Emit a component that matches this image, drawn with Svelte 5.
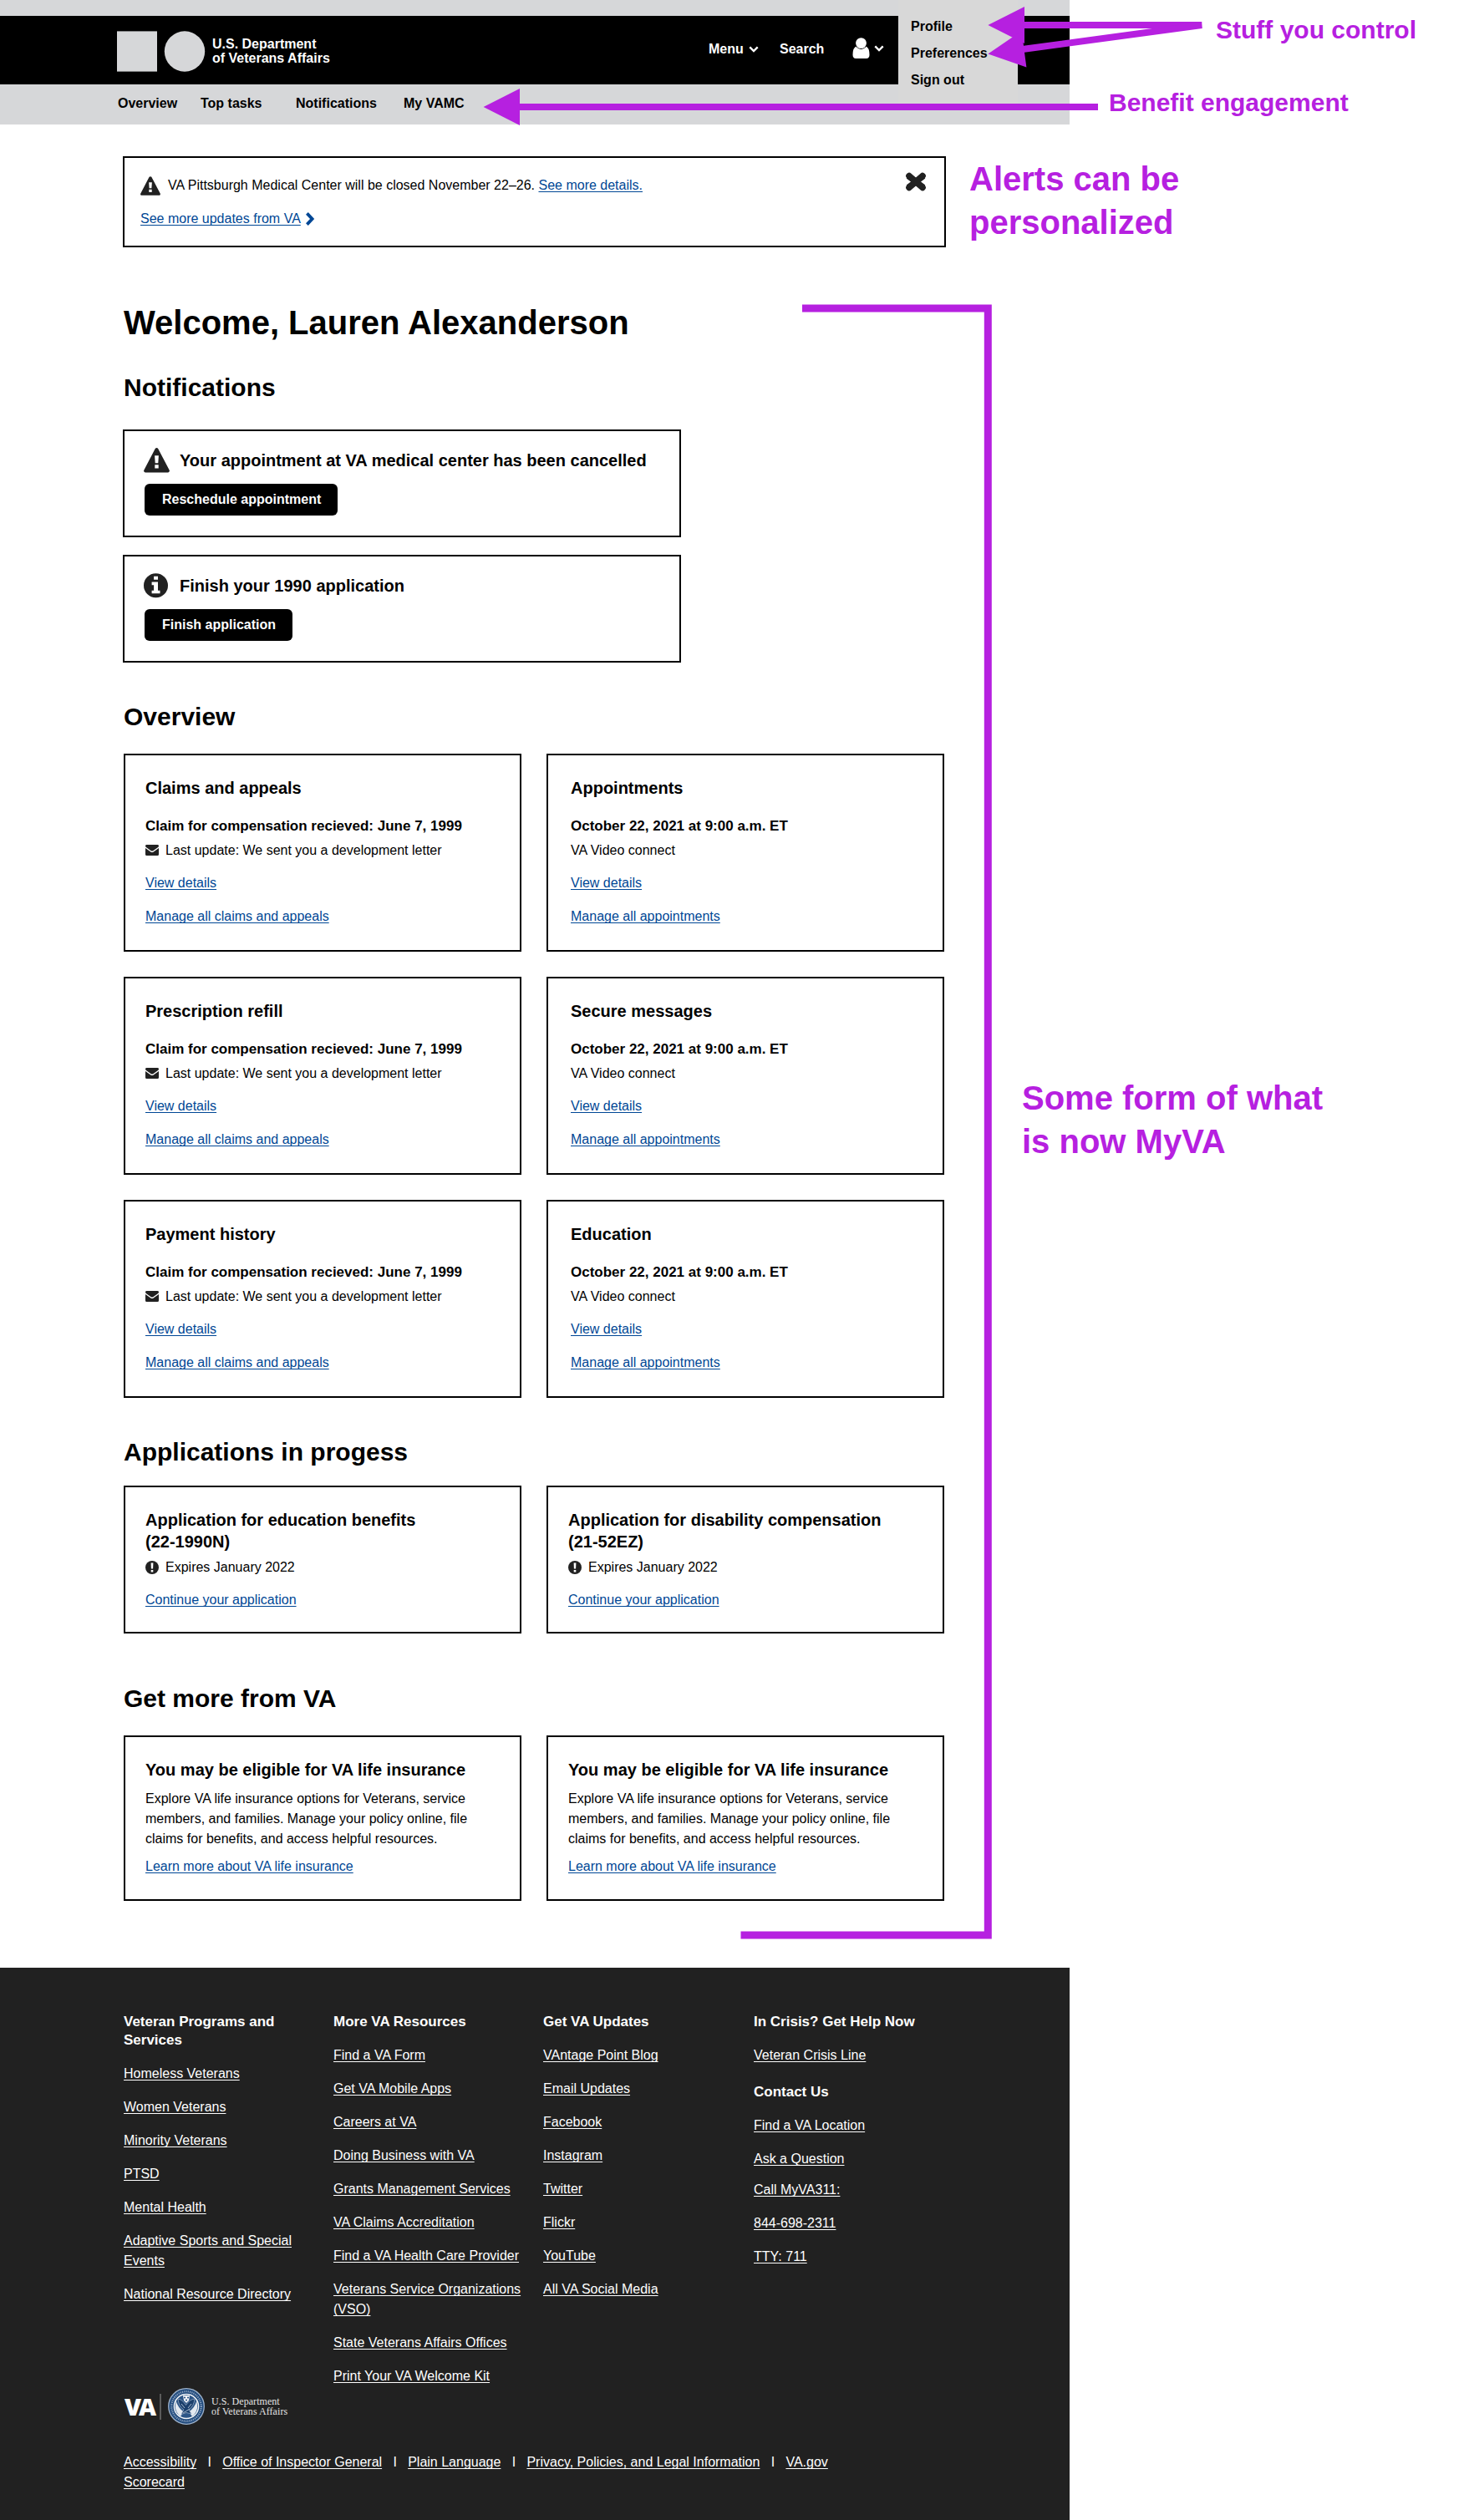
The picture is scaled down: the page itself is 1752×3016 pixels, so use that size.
<script>
  const navItems = ['Overview', 'Top tasks', 'Notifications', 'My VAMC'];
  const menuItems = ['Profile', 'Preferences', 'Sign out'];

  const notifications = [
    { icon: 'warning', title: 'Your appointment at VA medical center has been cancelled', action: 'Reschedule appointment' },
    { icon: 'info', title: 'Finish your 1990 application', action: 'Finish application' }
  ];

  const overview = [
    ['Claims and appeals', 'claim'],
    ['Appointments', 'visit'],
    ['Prescription refill', 'claim'],
    ['Secure messages', 'visit'],
    ['Payment history', 'claim'],
    ['Education', 'visit']
  ];

  const applications = [
    { name: 'Application for education benefits', form: '(22-1990N)' },
    { name: 'Application for disability compensation', form: '(21-52EZ)' }
  ];

  const offers = [1, 2];

  const footer = [
    [
      {
        title: 'Veteran Programs and\nServices',
        links: ['Homeless Veterans', 'Women Veterans', 'Minority Veterans', 'PTSD', 'Mental Health', 'Adaptive Sports and Special\nEvents', 'National Resource Directory']
      }
    ],
    [
      {
        title: 'More VA Resources',
        links: ['Find a VA Form', 'Get VA Mobile Apps', 'Careers at VA', 'Doing Business with VA', 'Grants Management Services', 'VA Claims Accreditation', 'Find a VA Health Care Provider', 'Veterans Service Organizations\n(VSO)', 'State Veterans Affairs Offices', 'Print Your VA Welcome Kit']
      }
    ],
    [
      {
        title: 'Get VA Updates',
        links: ['VAntage Point Blog', 'Email Updates', 'Facebook', 'Instagram', 'Twitter', 'Flickr', 'YouTube', 'All VA Social Media']
      }
    ],
    [
      { title: 'In Crisis? Get Help Now', links: ['Veteran Crisis Line'] },
      { title: 'Contact Us', links: ['Find a VA Location', 'Ask a Question'] },
      { title: '', links: ['Call MyVA311:', '844-698-2311', 'TTY: 711'] }
    ]
  ];

  const legal = ['Accessibility\nScorecard', 'Office of Inspector General', 'Plain Language', 'Privacy, Policies, and Legal Information', 'VA.gov'];
</script>

{#snippet warning(w, h)}
  <svg class="icon" width={w} height={h} viewBox="0 0 31 29.5">
    <path d="M17.2 1 30.6 26.4Q31.2 27.6 30.5 28.5 30 29.4 28.8 29.4H2.2Q1 29.4 .4 28.5-.2 27.6.4 26.4L13.7 1Q14.4.1 15.5.1T17.2 1Z" fill="#212121" />
    <path d="M13.1 9.2h4.8l-.6 9h-3.6ZM13.3 20.2h4.4v4.2h-4.4Z" fill="#fff" />
  </svg>
{/snippet}

{#snippet info()}
  <svg class="icon" width="29" height="29.5" viewBox="0 0 29 29">
    <circle cx="14.5" cy="14.5" r="14.5" fill="#212121" />
    <path d="M12.1 3.4h4.9v4.2h-4.9ZM9.6 10.3H17v10.2h2.5v3.6H9.6v-3.6h2.5v-6.6H9.6Z" fill="#fff" />
  </svg>
{/snippet}

{#snippet chevron()}
  <svg class="icon" width="12" height="8" viewBox="0 0 12 8">
    <path d="M1.3 1.4 6 6 10.7 1.4" fill="none" stroke="#fff" stroke-width="2.4" />
  </svg>
{/snippet}

<div class="board">
  <div class="page">
    <div class="strip"></div>
    <header class="masthead">
      <svg class="icon mark" width="106" height="49" viewBox="0 0 106 49">
        <rect x="0" y=".4" width="48" height="48.2" fill="#d6d7d9" />
        <circle cx="81" cy="24.5" r="24.2" fill="#d6d7d9" />
      </svg>
      <div class="dept">U.S. Department<br />of Veterans Affairs</div>
      <div class="tool menu">Menu {@render chevron()}</div>
      <div class="tool search">Search</div>
      <div class="user">
        <svg class="icon" width="21" height="25" viewBox="0 0 21 25">
          <path d="M4.8 10.6Q10.5 16 16.2 10.6 20.4 12 20.5 20.6 20.5 25 16.8 25H4.2Q.5 25 .5 20.6.6 12 4.8 10.6Z" fill="#fff" />
          <circle cx="10.5" cy="6.6" r="7.3" fill="#000" />
          <circle cx="10.5" cy="6.6" r="6.4" fill="#fff" />
        </svg>
        {@render chevron()}
      </div>
    </header>
    <nav class="nav">
      {#each navItems as item}<span>{item}</span>{/each}
    </nav>
    <div class="dropdown">
      {#each menuItems as item}<div>{item}</div>{/each}
    </div>

    <main class="main">
      <section class="alert">
        <div class="alert-body">
          <div class="alert-row">
            {@render warning(24, 23)}
            <span>VA Pittsburgh Medical Center will be closed November 22–26. <a href="#details">See more details.</a></span>
          </div>
          <div class="alert-more">
            <a href="#updates">See more updates from VA</a>
            <svg class="icon" width="12" height="16" viewBox="0 0 12 16">
              <path d="M2.4 1.4 8.6 8 2.4 14.6" fill="none" stroke="#004795" stroke-width="3.8" />
            </svg>
          </div>
        </div>
        <svg class="icon close" width="26" height="23" viewBox="0 0 26 23">
          <path d="M4 4.6 22 18.4M22 4.600 4 18.400" stroke="#212121" stroke-width="7.4" stroke-linecap="butt" />
          <path d="M4.200 4.800 21.800 18.200M21.800 4.800 4.200 18.200" stroke="#212121" stroke-width="5" stroke-linecap="round" />
          <path d="M5 4.500 21 18.500M21 4.500 5 18.500" stroke="#212121" stroke-width="7.600" stroke-linecap="round" />
        </svg>
      </section>

      <h1>Welcome, Lauren Alexanderson</h1>

      <h2 class="h-notes">Notifications</h2>
      <div class="notes">
        {#each notifications as n}
          <article class="note">
            <div class="note-row">
              <span class="note-icon">
                {#if n.icon === 'warning'}{@render warning(31, 29.5)}{:else}{@render info()}{/if}
              </span>
              <h3>{n.title}</h3>
            </div>
            <button>{n.action}</button>
          </article>
        {/each}
      </div>

      <h2 class="h-over">Overview</h2>
      <div class="grid over">
        {#each overview as [title, kind]}
          <article class="card {kind}">
            <h3>{title}</h3>
            {#if kind === 'claim'}
              <strong>Claim for compensation recieved: June 7, 1999</strong>
              <p class="status">
                <svg class="icon" width="16" height="13" viewBox="0 0 16 13">
                  <path d="M0 1.4Q.1 0 1.5 0h13Q15.9 0 16 1.4 16 2.4 14.8 3.3L9.6 7Q8 8.1 6.4 7L1.2 3.3Q0 2.4 0 1.4ZM0 4 6.3 8.5Q8 9.6 9.7 8.5L16 4v7.5Q16 13 14.5 13h-13Q0 13 0 11.500Z" fill="#212121" />
                </svg>
                Last update: We sent you a development letter
              </p>
              <a class="first" href="#view">View details</a>
              <a href="#manage">Manage all claims and appeals</a>
            {:else}
              <strong>October 22, 2021 at 9:00 a.m. ET</strong>
              <p class="status">VA Video connect</p>
              <a class="first" href="#view">View details</a>
              <a href="#manage">Manage all appointments</a>
            {/if}
          </article>
        {/each}
      </div>

      <h2 class="h-apps">Applications in progess</h2>
      <div class="grid apps">
        {#each applications as app}
          <article class="card">
            <h3>{app.name}<br />{app.form}</h3>
            <p class="status">
              <svg class="icon" width="16" height="16" viewBox="0 0 16 16">
                <circle cx="8" cy="8" r="8" fill="#212121" />
                <path d="M6.6 2.600h2.8l-.3 7H6.900ZM6.700 11h2.600v2.400H6.700Z" fill="#fff" />
              </svg>
              Expires January 2022
            </p>
            <a class="first" href="#continue">Continue your application</a>
          </article>
        {/each}
      </div>

      <h2 class="h-more">Get more from VA</h2>
      <div class="grid offers">
        {#each offers as offer (offer)}
          <article class="card">
            <h3>You may be eligible for VA life insurance</h3>
            <p class="copy">Explore VA life insurance options for Veterans, service<br />members, and families. Manage your policy online, file<br />claims for benefits, and access helpful resources.</p>
            <a href="#learn">Learn more about VA life insurance</a>
          </article>
        {/each}
      </div>
    </main>

    <footer class="footer">
      <div class="columns">
        {#each footer as column}
          <div class="column">
            {#each column as group}
              <section class="group">
                {#if group.title}<h4>{group.title}</h4>{/if}
                {#each group.links as link}<div class="item"><a href="#link">{link}</a></div>{/each}
              </section>
            {/each}
          </div>
        {/each}
      </div>
      <div class="brand">
        <span class="va">VA</span>
        <span class="rule"></span>
        <svg class="icon seal" width="44" height="44" viewBox="0 0 44 44">
          <circle cx="22" cy="22" r="21.300" fill="#204a7c" stroke="#9fb3cb" stroke-width="1.300" />
          <circle cx="22" cy="22" r="17.800" fill="none" stroke="#8fa5c1" stroke-width="2.200" stroke-dasharray="1.200 1.100" />
          <circle cx="22" cy="22" r="14.600" fill="#2c5586" stroke="#f2f5f8" stroke-width="1.500" />
          <path d="M9.500 15Q12 24 19 28.500L15 34Q9.500 30 8.800 23ZM34.500 15Q32 24 25 28.500L29 34Q34.500 30 35.200 23Z" fill="#e3e9f0" />
          <path d="M12 13Q17 13.500 21.500 20.500 26 13.500 32 13 31 22 25 26L28 31 22 29.500 16 31.500 19 26Q12.500 21.500 12 13Z" fill="#1b3f6c" stroke="#9db2ca" stroke-width=".7" />
          <path d="M16 19 20 24M28 19 24 24M18 30 26 25" stroke="#c9d5e2" stroke-width=".8" />
          <path d="M18 9h8l-1 6-3 3-3-3Z" fill="#f4f6f9" />
          <circle cx="20" cy="11.500" r="1" fill="#204a7c" /><circle cx="24" cy="11.500" r="1" fill="#204a7c" /><circle cx="22" cy="14.500" r="1" fill="#204a7c" />
        </svg>
        <span class="brand-name">U.S. Department<br />of Veterans Affairs</span>
      </div>
      <div class="legal">
        {#each legal as item, i}
          {#if i}<span class="bar">I</span>{/if}<a href="#legal">{item}</a>
        {/each}
      </div>
    </footer>
  </div>

  <!-- Reviewer annotations drawn over the page -->
  <svg class="marks" width="1752" height="2400" viewBox="0 0 1752 2400">
    <g fill="#b620e0">
      <path d="M1182.400 30 1226 8V26H1438.300V34H1226V52Z" />
      <path d="M1182.400 64.500 1222.600 37 1225 54.800 1437.800 26 1438.700 34 1226 62.700 1228.400 80.500Z" />
      <path d="M578.600 128 622 106V124H1314V132H622V150Z" />
    </g>
    <path d="M960 369H1182.300V2316H886.500" fill="none" stroke="#b620e0" stroke-width="9" />
  </svg>
  <div class="label stuff">Stuff you control</div>
  <div class="label benefit">Benefit engagement</div>
  <div class="label big alerts">Alerts can be<br />personalized</div>
  <div class="label big myva">Some form of what<br />is now MyVA</div>
</div>

<style>
  :global(body) {
    margin: 0;
    background: #fff;
  }
  .board {
    position: relative;
    width: 1752px;
    height: 3016px;
    overflow: hidden;
    font: 16px/21px 'Liberation Sans', Arial, sans-serif;
    color: #000;
  }
  .page {
    position: relative;
    width: 1280px;
  }
  .icon {
    display: block;
    flex: none;
  }
  h1, h2, h3, h4, p {
    margin: 0;
    font-weight: 700;
  }
  p {
    font-weight: 400;
  }
  a {
    color: #004795;
    text-decoration: underline;
    text-decoration-thickness: 1px;
    text-underline-offset: 2px;
    text-decoration-skip-ink: none;
  }

  .strip {
    height: 19px;
    background: #d6d7d9;
  }
  .masthead {
    display: flex;
    align-items: flex-start;
    height: 82px;
    padding-left: 140px;
    box-sizing: border-box;
    background: #000;
    color: #fff;
    font-weight: 700;
  }
  .mark {
    margin-top: 18px;
  }
  .dept {
    width: 594px;
    margin: 25px 0 0 8px;
    line-height: 17px;
  }
  .tool {
    display: flex;
    align-items: center;
    margin-top: 29px;
  }
  .menu {
    width: 85px;
    gap: 6px;
  }
  .search {
    width: 87px;
  }
  .user {
    display: flex;
    align-items: center;
    gap: 5px;
    margin-top: 26px;
  }
  .nav {
    display: grid;
    grid-template-columns: 99px 114px 129px auto;
    height: 36px;
    padding: 12px 0 0 141px;
    background: #d6d7d9;
    font-weight: 700;
  }
  .dropdown {
    position: absolute;
    top: 0;
    left: 1075px;
    width: 143px;
    height: 125px;
    padding: 16px 0 0 15px;
    box-sizing: border-box;
    background: #d8d8d8;
    font-weight: 700;
    line-height: 32px;
  }

  .main {
    padding: 38px 148px 80px;
  }
  .alert {
    display: flex;
    justify-content: space-between;
    width: 985px;
    height: 109px;
    margin-left: -1px;
    padding: 22px 21px 0 19px;
    box-sizing: border-box;
    border: 2px solid #000;
  }
  .alert-row {
    display: flex;
    gap: 9px;
  }
  .alert-more {
    display: flex;
    align-items: center;
    gap: 5px;
    margin-top: 17px;
  }
  .close {
    margin-top: -5px;
  }

  h1 {
    margin: 66px 0 0;
    font-size: 40px;
    line-height: 48px;
  }
  h2 {
    font-size: 30px;
    line-height: 33px;
  }
  h3 {
    font-size: 20px;
    line-height: 26px;
  }
  .h-notes {
    margin: 37px 0 34px;
  }
  .h-over {
    margin: 48px 0 28px;
  }
  .h-apps {
    margin: 48px 0 24px;
  }
  .h-more {
    margin: 61px 0 28px;
  }

  .notes {
    display: grid;
    gap: 21px;
    width: 668px;
    margin-left: -1px;
  }
  .note {
    height: 129px;
    padding: 20px 0 0 24px;
    box-sizing: border-box;
    border: 2px solid #000;
  }
  .note-row {
    display: flex;
    margin-left: -1px;
  }
  .note-row h3 {
    padding-top: 2px;
  }
  .note-icon {
    width: 43px;
  }
  .note button {
    display: block;
    height: 38px;
    margin-top: 13px;
    padding: 0 20px 0 21px;
    border: 0;
    border-radius: 6px;
    background: #000;
    color: #fff;
    font: 700 16px/38px 'Liberation Sans', Arial, sans-serif;
  }

  .grid {
    display: grid;
    grid-template-columns: 476px 476px;
    gap: 30px;
    width: 982px;
  }
  .over {
    grid-auto-rows: 237px;
  }
  .apps {
    grid-auto-rows: 177px;
  }
  .offers {
    grid-auto-rows: 198px;
  }
  .card {
    display: flex;
    flex-direction: column;
    align-items: flex-start;
    padding: 26px 0 0 24px;
    border: 2px solid #000;
    box-sizing: border-box;
  }
  .card.visit {
    padding-left: 27px;
  }
  .card strong {
    margin-top: 21px;
    font-size: 17px;
    line-height: 23px;
  }
  .status {
    display: flex;
    align-items: center;
    gap: 8px;
    margin-top: 7px;
  }
  .card a {
    margin-top: 19px;
  }
  .card a.first {
    margin-top: 18px;
  }
  .copy {
    margin-top: 10px;
    line-height: 24px;
  }
  .offers .card a {
    margin-top: 10px;
  }

  .footer {
    height: 661px;
    padding: 54px 0 0 148px;
    box-sizing: border-box;
    background: #212121;
    color: #fff;
    line-height: 24px;
  }
  .footer a {
    color: #fff;
    white-space: pre-line;
  }
  .columns {
    display: grid;
    grid-template-columns: 251px 251px 252px auto;
    height: 447px;
  }
  .group + .group {
    margin-top: 21px;
  }
  .group:nth-child(3) {
    margin-top: 13px;
  }
  h4 {
    margin-bottom: 17px;
    font-size: 17px;
    line-height: 22px;
    white-space: pre-line;
  }
  .item + .item {
    margin-top: 16px;
  }
  .brand {
    display: flex;
    align-items: center;
    height: 44px;
    margin-top: 2px;
  }
  .va {
    width: 43px;
    padding-left: 1px;
    box-sizing: border-box;
    font: 800 29px/30px 'Open Sans', 'Liberation Sans', sans-serif;
    letter-spacing: -3px;
  }
  .rule {
    width: 2px;
    height: 31px;
    margin-right: 8px;
    background: #5b5b5b;
  }
  .brand-name {
    margin-left: 8px;
    font: 12px/12px 'Liberation Serif', serif;
    letter-spacing: 0.05px;
    color: #e4e4e4;
  }
  .legal {
    display: flex;
    align-items: flex-start;
    gap: 13.300px;
    margin-top: 33px;
  }

  .marks {
    position: absolute;
    top: 0;
    left: 0;
  }
  .label {
    position: absolute;
    color: #b620e0;
    font-size: 30px;
    font-weight: 700;
    line-height: 33px;
    white-space: nowrap;
  }
  .big {
    font-size: 40px;
    line-height: 52px;
  }
  .stuff {
    top: 19px;
    left: 1455px;
  }
  .benefit {
    top: 106px;
    left: 1327px;
  }
  .alerts {
    top: 188px;
    left: 1160px;
  }
  .myva {
    top: 1288px;
    left: 1223px;
  }
</style>
